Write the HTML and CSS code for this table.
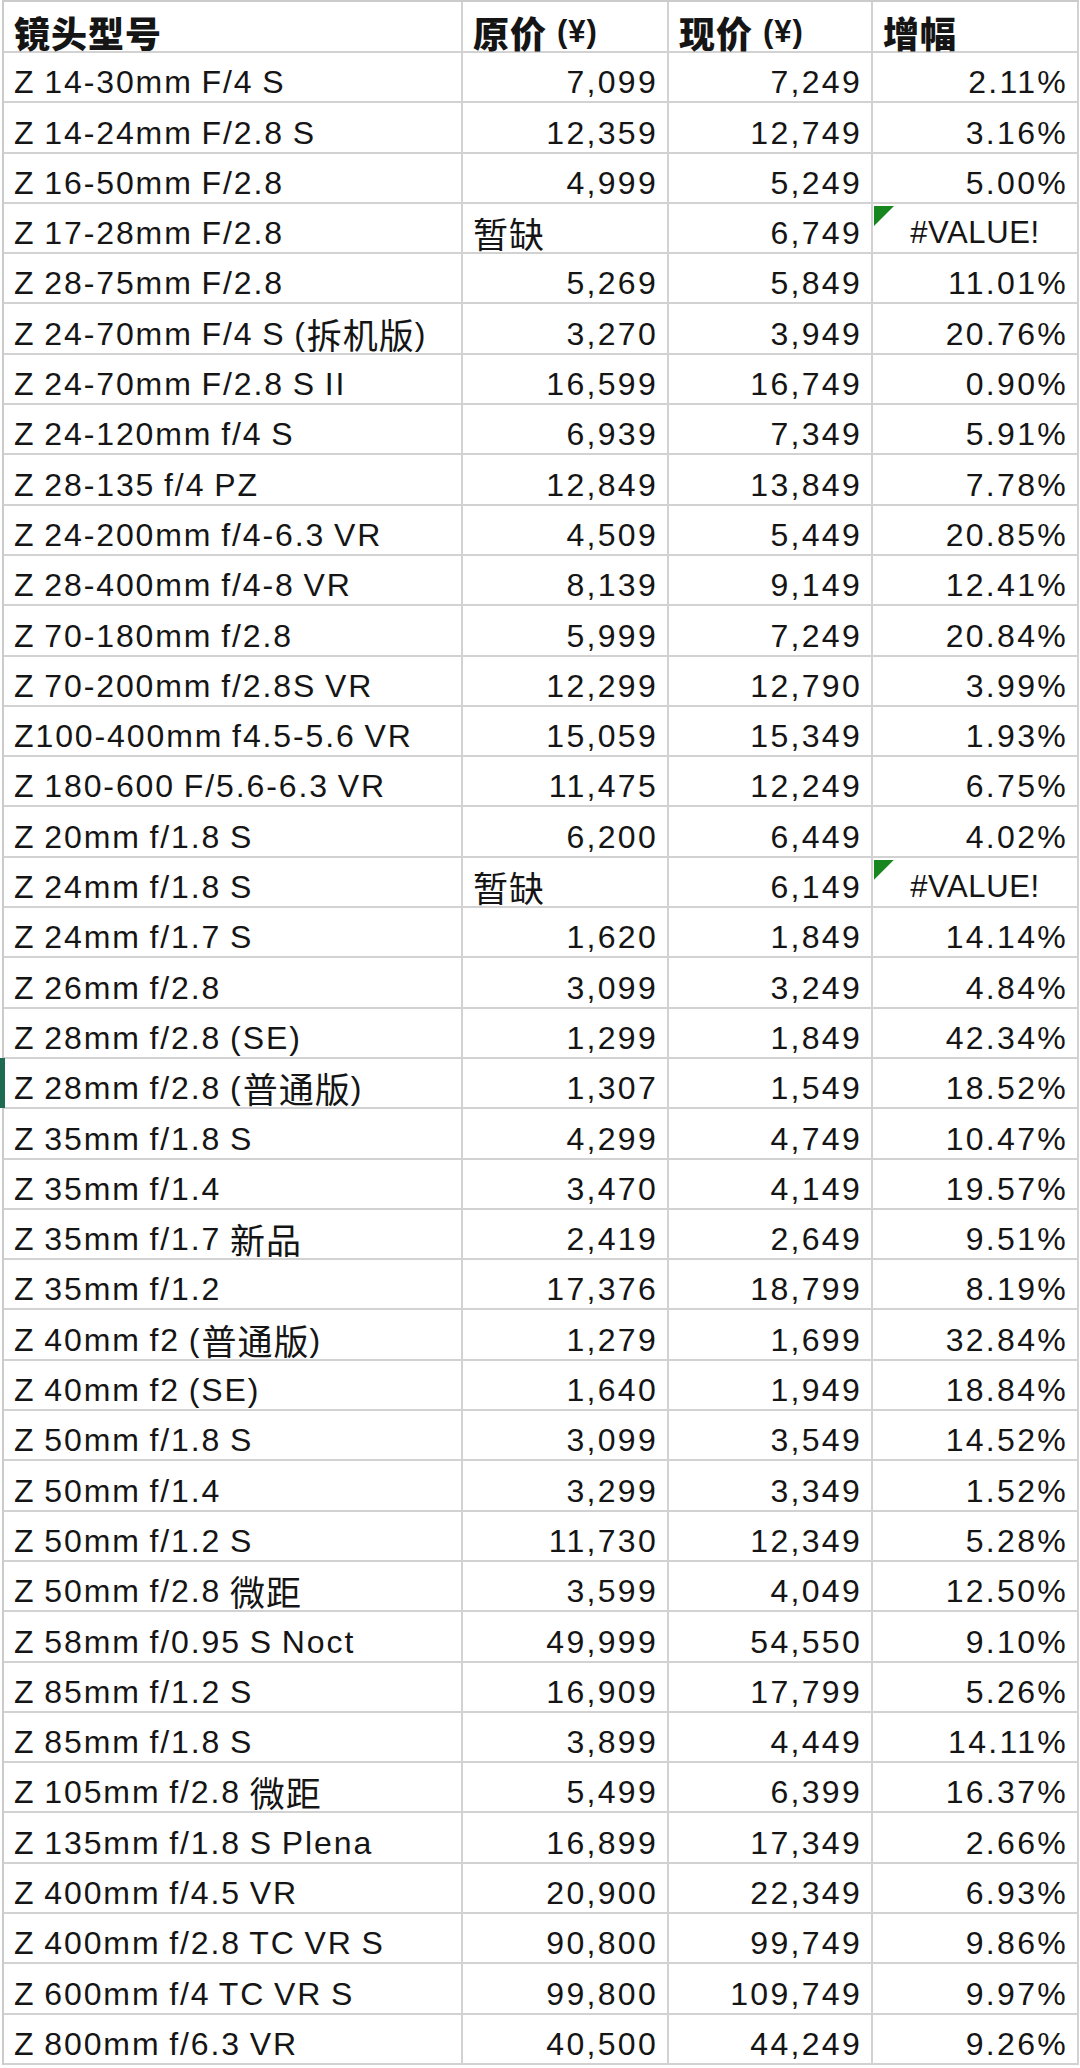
FILE: index.html
```html
<!DOCTYPE html>
<html lang="zh">
<head>
<meta charset="utf-8">
<title>Nikon Z 镜头价格</title>
<link rel="stylesheet" href="styles.css">
</head>
<body>
<div class="sheet">
  <div class="c h"><span class="cjk hb">镜头型号</span></div>
  <div class="c h"><span class="cjk hb">原价</span><span class="yen">(¥)</span></div>
  <div class="c h"><span class="cjk hb">现价</span><span class="yen">(¥)</span></div>
  <div class="c h"><span class="cjk hb">增幅</span></div>

  <div class="c">Z 14-30mm F/4 S</div><div class="c num">7,099</div><div class="c num">7,249</div><div class="c num">2.11%</div>
  <div class="c">Z 14-24mm F/2.8 S</div><div class="c num">12,359</div><div class="c num">12,749</div><div class="c num">3.16%</div>
  <div class="c">Z 16-50mm F/2.8</div><div class="c num">4,999</div><div class="c num">5,249</div><div class="c num">5.00%</div>
  <div class="c">Z 17-28mm F/2.8</div><div class="c"><span class="cjk">暂缺</span></div><div class="c num">6,749</div><div class="c err"><i class="tri"></i>#VALUE!</div>
  <div class="c">Z 28-75mm F/2.8</div><div class="c num">5,269</div><div class="c num">5,849</div><div class="c num">11.01%</div>
  <div class="c">Z 24-70mm F/4 S (<span class="cjk">拆机版</span>)</div><div class="c num">3,270</div><div class="c num">3,949</div><div class="c num">20.76%</div>
  <div class="c">Z 24-70mm F/2.8 S II</div><div class="c num">16,599</div><div class="c num">16,749</div><div class="c num">0.90%</div>
  <div class="c">Z 24-120mm f/4 S</div><div class="c num">6,939</div><div class="c num">7,349</div><div class="c num">5.91%</div>
  <div class="c">Z 28-135 f/4 PZ</div><div class="c num">12,849</div><div class="c num">13,849</div><div class="c num">7.78%</div>
  <div class="c">Z 24-200mm f/4-6.3 VR</div><div class="c num">4,509</div><div class="c num">5,449</div><div class="c num">20.85%</div>
  <div class="c">Z 28-400mm f/4-8 VR</div><div class="c num">8,139</div><div class="c num">9,149</div><div class="c num">12.41%</div>
  <div class="c">Z 70-180mm f/2.8</div><div class="c num">5,999</div><div class="c num">7,249</div><div class="c num">20.84%</div>
  <div class="c">Z 70-200mm f/2.8S VR</div><div class="c num">12,299</div><div class="c num">12,790</div><div class="c num">3.99%</div>
  <div class="c">Z100-400mm f4.5-5.6 VR</div><div class="c num">15,059</div><div class="c num">15,349</div><div class="c num">1.93%</div>
  <div class="c">Z 180-600 F/5.6-6.3 VR</div><div class="c num">11,475</div><div class="c num">12,249</div><div class="c num">6.75%</div>
  <div class="c">Z 20mm f/1.8 S</div><div class="c num">6,200</div><div class="c num">6,449</div><div class="c num">4.02%</div>
  <div class="c">Z 24mm f/1.8 S</div><div class="c"><span class="cjk">暂缺</span></div><div class="c num">6,149</div><div class="c err"><i class="tri"></i>#VALUE!</div>
  <div class="c">Z 24mm f/1.7 S</div><div class="c num">1,620</div><div class="c num">1,849</div><div class="c num">14.14%</div>
  <div class="c">Z 26mm f/2.8</div><div class="c num">3,099</div><div class="c num">3,249</div><div class="c num">4.84%</div>
  <div class="c">Z 28mm f/2.8 (SE)</div><div class="c num">1,299</div><div class="c num">1,849</div><div class="c num">42.34%</div>
  <div class="c sel">Z 28mm f/2.8 (<span class="cjk">普通版</span>)</div><div class="c num">1,307</div><div class="c num">1,549</div><div class="c num">18.52%</div>
  <div class="c">Z 35mm f/1.8 S</div><div class="c num">4,299</div><div class="c num">4,749</div><div class="c num">10.47%</div>
  <div class="c">Z 35mm f/1.4</div><div class="c num">3,470</div><div class="c num">4,149</div><div class="c num">19.57%</div>
  <div class="c">Z 35mm f/1.7 <span class="cjk">新品</span></div><div class="c num">2,419</div><div class="c num">2,649</div><div class="c num">9.51%</div>
  <div class="c">Z 35mm f/1.2</div><div class="c num">17,376</div><div class="c num">18,799</div><div class="c num">8.19%</div>
  <div class="c">Z 40mm f2 (<span class="cjk">普通版</span>)</div><div class="c num">1,279</div><div class="c num">1,699</div><div class="c num">32.84%</div>
  <div class="c">Z 40mm f2 (SE)</div><div class="c num">1,640</div><div class="c num">1,949</div><div class="c num">18.84%</div>
  <div class="c">Z 50mm f/1.8 S</div><div class="c num">3,099</div><div class="c num">3,549</div><div class="c num">14.52%</div>
  <div class="c">Z 50mm f/1.4</div><div class="c num">3,299</div><div class="c num">3,349</div><div class="c num">1.52%</div>
  <div class="c">Z 50mm f/1.2 S</div><div class="c num">11,730</div><div class="c num">12,349</div><div class="c num">5.28%</div>
  <div class="c">Z 50mm f/2.8 <span class="cjk">微距</span></div><div class="c num">3,599</div><div class="c num">4,049</div><div class="c num">12.50%</div>
  <div class="c">Z 58mm f/0.95 S Noct</div><div class="c num">49,999</div><div class="c num">54,550</div><div class="c num">9.10%</div>
  <div class="c">Z 85mm f/1.2 S</div><div class="c num">16,909</div><div class="c num">17,799</div><div class="c num">5.26%</div>
  <div class="c">Z 85mm f/1.8 S</div><div class="c num">3,899</div><div class="c num">4,449</div><div class="c num">14.11%</div>
  <div class="c">Z 105mm f/2.8 <span class="cjk">微距</span></div><div class="c num">5,499</div><div class="c num">6,399</div><div class="c num">16.37%</div>
  <div class="c">Z 135mm f/1.8 S Plena</div><div class="c num">16,899</div><div class="c num">17,349</div><div class="c num">2.66%</div>
  <div class="c">Z 400mm f/4.5 VR</div><div class="c num">20,900</div><div class="c num">22,349</div><div class="c num">6.93%</div>
  <div class="c">Z 400mm f/2.8 TC VR S</div><div class="c num">90,800</div><div class="c num">99,749</div><div class="c num">9.86%</div>
  <div class="c">Z 600mm f/4 TC VR S</div><div class="c num">99,800</div><div class="c num">109,749</div><div class="c num">9.97%</div>
  <div class="c">Z 800mm f/6.3 VR</div><div class="c num">40,500</div><div class="c num">44,249</div><div class="c num">9.26%</div>
</div>
</body>
</html>
```

FILE: styles.css
```css
html, body {
  margin: 0;
  padding: 0;
  background: #ffffff;
}

body {
  font-family: "Liberation Sans", Arial, "Noto Sans CJK SC", sans-serif;
  color: #151515;
}

.sheet {
  display: grid;
  grid-template-columns: 459px 206px 204px 206px;
  grid-template-rows: 51px;
  grid-auto-rows: 50.3px;
  width: max-content;
  margin-left: 2px;
  border-left: 2px solid #cbcbcb;
  border-top: 2px solid #cbcbcb;
}

.c {
  position: relative;
  box-sizing: border-box;
  display: flex;
  align-items: flex-end;
  padding: 0 10px 1px 10px;
  border-right: 2px solid #d2d2d2;
  border-bottom: 2px solid #d2d2d2;
  font-size: 32px;
  line-height: 36px;
  letter-spacing: 1.9px;
  word-spacing: -2px;
  white-space: pre;
}

.num {
  justify-content: flex-end;
  padding-right: 9px;
  letter-spacing: 2.3px;
}

.err {
  justify-content: center;
  font-size: 31px;
  letter-spacing: 0.6px;
}

.cjk {
  font-family: "Noto Sans CJK SC", sans-serif;
  font-size: 35px;
  line-height: 36px;
  letter-spacing: 1px;
}

.h {
  font-weight: bold;
}

.hb {
  font-weight: 900;
  font-size: 36px;
  letter-spacing: 1px;
}

.yen {
  margin-left: 10px;
  font-size: 31px;
  font-weight: bold;
  letter-spacing: 1px;
}

.tri {
  position: absolute;
  left: 1px;
  top: 2px;
  width: 20px;
  height: 20px;
  background: #17861f;
  clip-path: polygon(0 0, 100% 0, 0 100%);
}

.sel::before {
  content: "";
  position: absolute;
  left: -4px;
  top: -1px;
  bottom: -1px;
  width: 5px;
  background: #1f6b52;
}
```
